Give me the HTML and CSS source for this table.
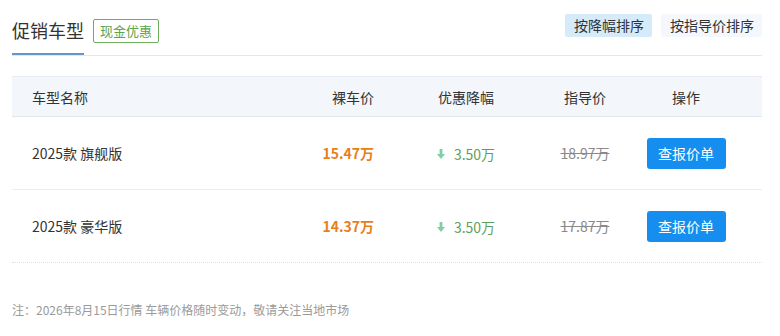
FILE: index.html
```html
<!DOCTYPE html>
<html lang="zh-CN">
<head>
<meta charset="utf-8">
<title>促销车型</title>
<link rel="stylesheet" href="styles.css">
</head>
<body>
<div class="wrap">
  <div class="topbar">
    <div class="title-group">
      <h2 class="title">促销车型</h2>
      <span class="tag">现金优惠</span>
    </div>
    <div class="sorts">
      <span class="sort active">按降幅排序</span>
      <span class="sort">按指导价排序</span>
    </div>
  </div>

  <div class="table">
    <div class="row head">
      <div class="c-name">车型名称</div>
      <div class="c-price">裸车价</div>
      <div class="c-drop">优惠降幅</div>
      <div class="c-guide">指导价</div>
      <div class="c-op">操作</div>
    </div>
    <div class="row">
      <div class="c-name">2025款 旗舰版</div>
      <div class="c-price"><span class="price">15.47万</span></div>
      <div class="c-drop"><span class="drop"><svg class="arrow" width="8" height="10" viewBox="0 0 8 10"><path d="M2.6 0h2.8v5H8L4 10 0 5h2.6z" fill="#7fcfa6"/></svg>3.50万</span></div>
      <div class="c-guide"><span class="guide">18.97万</span></div>
      <div class="c-op"><button class="btn">查报价单</button></div>
    </div>
    <div class="row last">
      <div class="c-name">2025款 豪华版</div>
      <div class="c-price"><span class="price">14.37万</span></div>
      <div class="c-drop"><span class="drop"><svg class="arrow" width="8" height="10" viewBox="0 0 8 10"><path d="M2.6 0h2.8v5H8L4 10 0 5h2.6z" fill="#7fcfa6"/></svg>3.50万</span></div>
      <div class="c-guide"><span class="guide">17.87万</span></div>
      <div class="c-op"><button class="btn">查报价单</button></div>
    </div>
  </div>

  <p class="note">注：2026年8月15日行情 车辆价格随时变动，敬请关注当地市场</p>
</div>
</body>
</html>
```

FILE: styles.css
```css
* { box-sizing: border-box; }
html, body { margin: 0; padding: 0; background: #fff; }
body {
  font-family: "Noto Sans CJK SC", "Noto Sans", sans-serif;
  color: #333;
}
.wrap { width: 750px; margin-left: 12px; }

.topbar {
  height: 56px;
  display: flex;
  justify-content: space-between;
  align-items: flex-start;
  border-bottom: 1px solid #e3e6ea;
}
.title-group {
  display: flex;
  align-items: center;
  height: 55px;
  border-bottom: 2px solid #5f97cf;
  margin-bottom: -1px;
  padding-top: 6px;
  width: 72px;
  white-space: nowrap;
}
.title {
  margin: 0;
  font-size: 18px;
  font-weight: 400;
  line-height: 24px;
  color: #333;
}
.tag {
  margin-left: 9px;
  margin-top: 2px;
  height: 24px;
  width: 66px;
  border: 1px solid #6cae5a;
  border-radius: 2px;
  color: #5ea34d;
  font-size: 13px;
  line-height: 22px;
  text-align: center;
  flex-shrink: 0;
}
.sorts {
  display: flex;
  gap: 9px;
  margin-top: 14px;
}
.sort {
  height: 23px;
  line-height: 23px;
  padding: 0 8px 0 9px;
  font-size: 14px;
  color: #333;
  background: #f4f8fc;
  border-radius: 2px;
}
.sort.active { background: #d5ebfa; }

.table { margin-top: 20px; }
.row {
  display: grid;
  grid-template-columns: 200px 182px 144px 94px 108px 1fr;
  align-items: center;
  height: 73px;
  border-bottom: 1px solid #ebedf0;
  font-size: 14px;
}
.row.head {
  height: 41px;
  background: #f3f6fa;
  border-top: 1px solid #e8ebef;
  border-bottom: 1px solid #e3e6ea;
  color: #333;
}
.row.last { border-bottom: 1px dotted #dcdfe3; }
.c-name { padding-left: 20px; }
.c-price { text-align: right; padding-right: 20px; }
.c-drop, .c-guide, .c-op { text-align: center; }

.price { color: #e8801a; font-weight: 700; }
.drop { color: #5f9f5c; display: inline-flex; align-items: center; }
.arrow { margin-right: 9px; }
.guide { color: #8a8a8a; text-decoration: line-through; }
.btn {
  width: 79px;
  height: 31px;
  border: none;
  border-radius: 3px;
  background: #158ef0;
  color: #fff;
  font-family: inherit;
  font-size: 14px;
  padding: 0;
}

.note {
  margin: 38px 0 0;
  font-size: 12px;
  line-height: 18px;
  color: #9a9a9a;
}
```
